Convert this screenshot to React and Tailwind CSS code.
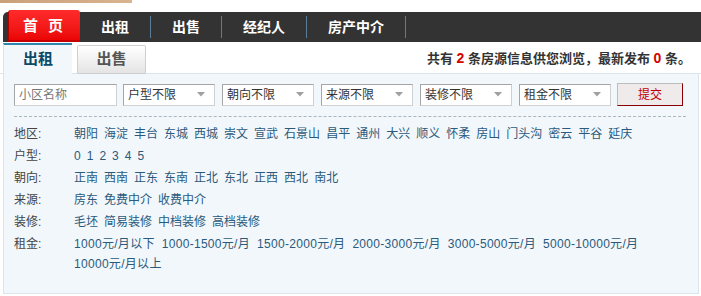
import React from "react";

const font = { fontFamily: '"Liberation Sans", "Noto Sans CJK SC", sans-serif' };

const navItems = ["出租", "出售", "经纪人", "房产中介"];
const selects = ["户型不限", "朝向不限", "来源不限", "装修不限", "租金不限"];

const rows = [
  ["地区:", ["朝阳", "海淀", "丰台", "东城", "西城", "崇文", "宣武", "石景山", "昌平", "通州", "大兴", "顺义", "怀柔", "房山", "门头沟", "密云", "平谷", "延庆"]],
  ["户型:", ["0", "1", "2", "3", "4", "5"]],
  ["朝向:", ["正南", "西南", "正东", "东南", "正北", "东北", "正西", "西北", "南北"]],
  ["来源:", ["房东", "免费中介", "收费中介"]],
  ["装修:", ["毛坯", "简易装修", "中档装修", "高档装修"]],
  ["租金:", ["1000元/月以下", "1000-1500元/月", "1500-2000元/月", "2000-3000元/月", "3000-5000元/月", "5000-10000元/月", "10000元/月以上"]],
];

function Select({ label }) {
  return (
    <div className="w-[92px] h-[22px] bg-white border border-[#a5a5a5] border-b-[#d0d0d0] border-r-[#d0d0d0] flex items-center justify-between pl-[4px] pr-[9px] text-[12px] text-[#333]">
      <span>{label}</span>
      <svg width="8" height="5" viewBox="0 0 8 5">
        <path d="M0 0h8L4 4.5z" fill="#a0a0a0" />
      </svg>
    </div>
  );
}

export default function App() {
  return (
    <div className="w-[701px] h-[296px] bg-white overflow-hidden" style={font}>
      <div className="h-[3px] w-[132px] bg-gradient-to-r from-[#caa07a] to-[#d9b48f]" />

      {/* main nav */}
      <div className="mt-[9px] ml-[3px] h-[30px] bg-[#333333] rounded-tl-[5px] flex items-stretch pl-[5px]">
        <div className="-mt-[2px] h-[32px] w-[72px] rounded-t-[3px] bg-gradient-to-b from-[#ff2a2a] to-[#e80000] border-l border-[#b00000] shadow-[inset_0_-2px_0_#c40000] flex items-center justify-center text-white font-bold text-[15px] tracking-[3px]">
          首 页
        </div>
        {navItems.map((t) => (
          <div key={t} className="flex items-center">
            <span className="px-[21px] text-white font-bold text-[14px]">{t}</span>
            <span className="w-px h-[22px] bg-[#5b7d99]" />
          </div>
        ))}
      </div>

      {/* sub tabs */}
      <div className="mt-px flex items-end h-[31px] border-b border-[#dbe5ed] pl-[3px]">
        <div className="h-[31px] w-[69px] -mb-px bg-[#f2f7fb] border-t-2 border-[#2f86ad] border-l border-l-[#dbe5ed] flex items-center justify-center text-[15px] font-bold text-[#0d4a68]">
          出租
        </div>
        <div className="ml-[5px] h-[29px] w-[69px] -mb-px rounded-t-[2px] bg-gradient-to-b from-white to-[#e4e4e4] border border-[#cfcfcf] flex items-center justify-center text-[15px] font-bold text-[#555]">
          出售
        </div>
        <div className="flex-1 self-center text-right pr-[10px] text-[13px] font-bold text-[#333]">
          共有 <span className="text-[14px] text-[#d40000]">2</span> 条房源信息供您浏览，最新发布 <span className="text-[14px] text-[#d40000]">0</span> 条。
        </div>
      </div>

      {/* panel */}
      <div className="ml-[3px] w-[696px] h-[220px] bg-[#f2f7fb] border-x border-b border-[#dbe5ed] pt-[9px] pl-[10px] pr-[12px]">
        <div className="flex items-center">
          <div className="w-[103px] h-[22px] bg-white border border-[#a5a5a5] border-b-[#d0d0d0] border-r-[#d0d0d0] pl-[4px] flex items-center text-[12px] text-[#777]">
            小区名称
          </div>
          <div className="flex gap-[7px] ml-[6px]">
            {selects.map((s) => (
              <Select key={s} label={s} />
            ))}
          </div>
          <div className="ml-[6px] w-[66px] h-[23px] bg-[#efebeb] border border-[#bdbdbd] border-b-[#8a0000] border-r-[#8a0000] flex items-center justify-center text-[12px] text-[#c00000]">
            提交
          </div>
        </div>

        <div className="mt-[10px] border-t border-dashed border-[#a9b7c2]" />

        <div className="mt-[7px] text-[12px]">
          {rows.map(([label, items], i) => (
            <div key={label} className="flex leading-[20px] mb-[2px]">
              <div className="w-[60px] shrink-0 text-[#444]">{label}</div>
              <div className={i === 5 ? "flex flex-wrap gap-x-[7px] tracking-[0.3px] text-[#2a5a7c]" : "flex flex-wrap gap-x-[6px] text-[#2a5a7c]"}>
                {items.map((it) => (
                  <span key={it}>{it}</span>
                ))}
              </div>
            </div>
          ))}
        </div>
      </div>
    </div>
  );
}
